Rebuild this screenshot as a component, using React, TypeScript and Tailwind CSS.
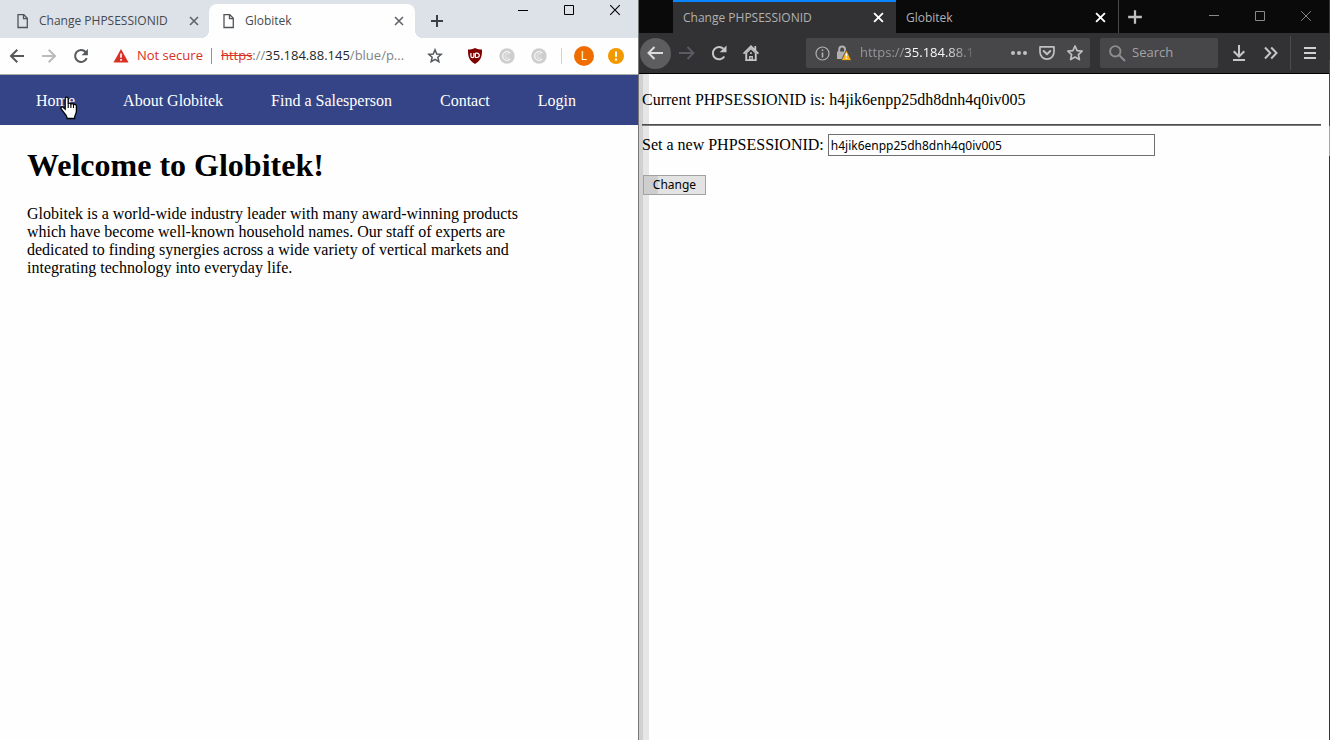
import type { ReactNode } from "react";

type IconProps = { label: string; className?: string; children: ReactNode };

function ToolButton({ label, className = "w-8", children }: IconProps) {
  return (
    <button type="button" aria-label={label} className={`flex h-8 shrink-0 items-center justify-center ${className}`}>
      {children}
    </button>
  );
}

function FileIcon() {
  return (
    <svg width="12" height="16" viewBox="0 0 12 16" fill="none" stroke="#505357" strokeWidth="1.3" className="shrink-0">
      <path d="M1 1.700h5.800l3.500 3.600v9.200H1z" />
      <path d="M6.500 1.700v3.900h3.800" />
    </svg>
  );
}

function Cross({ size = 10, color = "#5f6368", width = 1.6 }: { size?: number; color?: string; width?: number }) {
  return (
    <svg width={size} height={size} viewBox="0 0 10 10" fill="none" stroke={color} strokeWidth={width}>
      <path d="M1 1l8 8M9 1L1 9" />
    </svg>
  );
}

function Plus({ size, color }: { size: number; color: string }) {
  return (
    <svg width={size} height={size} viewBox="0 0 14 14" fill="none" stroke={color} strokeWidth="2">
      <path d="M7 1v12M1 7h12" />
    </svg>
  );
}

function ChromeTabs() {
  return (
    <div className="flex h-[38px] bg-[#dde1e8] font-['Open_Sans',sans-serif] text-xs text-[#45494d]">
      <div className="flex w-[209px] items-center pt-1 pl-[17px]">
        <FileIcon />
        <span className="ml-[10px] flex-1 whitespace-nowrap">Change PHPSESSIONID</span>
        <button type="button" aria-label="Close Change PHPSESSIONID" className="mr-[10px]"><Cross /></button>
      </div>
      <div className="relative mt-1 flex w-[206px] items-center rounded-t-lg bg-[#fefefe] pl-[14px]">
        <span className="absolute bottom-0 -left-2 size-2 bg-[radial-gradient(circle_at_0_0,transparent_8px,#fefefe_8px)]" />
        <span className="absolute -right-2 bottom-0 size-2 bg-[radial-gradient(circle_at_100%_0,transparent_8px,#fefefe_8px)]" />
        <FileIcon />
        <span className="ml-[10px] flex-1">Globitek</span>
        <button type="button" aria-label="Close Globitek" className="mr-[11px]"><Cross /></button>
      </div>
      <button type="button" aria-label="New tab" className="ml-[15px] self-center pt-1"><Plus size={14} color="#3c4043" /></button>
      <div className="ml-auto flex h-5">
        <ToolButton label="Minimize" className="w-[46px] max-h-5">
          <svg width="10" height="10" stroke="#000"><path d="M0 5.5h10" /></svg>
        </ToolButton>
        <ToolButton label="Maximize" className="w-[46px] max-h-5">
          <svg width="10" height="10" stroke="#000" fill="none"><path d="M.5.5h9v9h-9z" /></svg>
        </ToolButton>
        <ToolButton label="Close window" className="w-[46px] max-h-5"><Cross size={12} color="#000" width={0.9} /></ToolButton>
      </div>
    </div>
  );
}

function GreyExtension() {
  return (
    <svg width="16" height="16" viewBox="0 0 16 16" fill="none">
      <circle cx="8" cy="8" r="7.700" fill="#cecece" />
      <path d="M11.300 5.200A4.300 4.300 0 1 0 11.300 10.800" stroke="#f6f6f6" strokeWidth="1.200" />
      <path d="M10 6.500A2.200 2.200 0 1 0 10 9.500" stroke="#f6f6f6" strokeWidth="0.800" />
      <path d="M9 2.600v1.500M9 11.900v1.500" stroke="#e8e8e8" />
    </svg>
  );
}

function ChromeToolbar() {
  return (
    <div className="flex h-9 items-center bg-[#fefefe] pr-[6px] pl-px font-['Open_Sans',sans-serif] text-[13px]">
      <ToolButton label="Back">
        <svg width="16" height="16" viewBox="0 0 16 16" fill="none" stroke="#54575b" strokeWidth="2"><path d="M15 8H2.500M8.300 1.700L2 8l6.300 6.300" /></svg>
      </ToolButton>
      <ToolButton label="Forward">
        <svg width="16" height="16" viewBox="0 0 16 16" fill="none" stroke="#b9babc" strokeWidth="2"><path d="M1 8h12.500M7.700 1.700L14 8l-6.300 6.300" /></svg>
      </ToolButton>
      <ToolButton label="Reload">
        <svg width="16" height="16" viewBox="0 0 16 16"><path d="M13.700 10.200A6 6 0 1 1 12.600 4" fill="none" stroke="#54575b" strokeWidth="2" /><path d="M14.900 1v6.300H8.600z" fill="#54575b" /></svg>
      </ToolButton>
      <button type="button" className="ml-4 flex items-center gap-2 whitespace-nowrap text-[#d93025]">
        <svg width="16" height="14" viewBox="0 0 16 14"><path d="M8 0l7.500 13.500H.5z" fill="#d93025" /><path d="M8 4.500v4.300M8 10v1.800" stroke="#fff" strokeWidth="1.600" /></svg>
        Not secure
      </button>
      <span className="ml-2 h-4 w-px bg-[#8f9296]" />
      <div role="textbox" aria-label="Address" contentEditable suppressContentEditableWarning className="ml-[9px] flex-1 whitespace-nowrap text-[#7f8387]">
        <span className="text-[#d93025] line-through">https</span>://<span className="text-[#26282b]">35.184.88.145</span>/blue/p...
      </div>
      <ToolButton label="Bookmark this page" className="mr-2 w-8">
        <svg width="16" height="16" viewBox="0 0 16 16" fill="none" stroke="#54575b" strokeWidth="1.500"><path d="M8 1.800l1.750 4.150 4.500.400-3.400 2.950 1 4.400L8 11.350 4.150 13.700l1-4.400-3.400-2.950 4.500-.400z" /></svg>
      </ToolButton>
      <ToolButton label="uBlock Origin">
        <svg width="16" height="16" viewBox="0 0 16 16"><path d="M8 0c2.500 1.500 4.500 1.300 7 1.600 0 7-.500 10.500-7 14.400C1.500 12.100 1 8.600 1 1.600 3.500 1.300 5.500 1.500 8 0z" fill="#800000" /><path d="M3.900 5v3c0 2.200 3 2.200 3 0V5M8.400 5.200v4.300h1.500c3.200 0 3.200-4.300 0-4.300H8.400" fill="none" stroke="#fff" strokeWidth="1.200" /></svg>
      </ToolButton>
      <ToolButton label="Cookie extension"><GreyExtension /></ToolButton>
      <ToolButton label="Consent extension"><GreyExtension /></ToolButton>
      <span className="mx-[6px] h-4 w-px bg-[#cfd1d4]" />
      <ToolButton label="Profile">
        <span className="flex size-5 items-center justify-center rounded-full bg-[#ef6c00] text-xs text-white">L</span>
      </ToolButton>
      <ToolButton label="Update available">
        <svg width="16" height="16"><circle cx="8" cy="8" r="8" fill="#f29900" /><path d="M8 3.500v5.300M8 10.500v2" stroke="#fff" strokeWidth="2" /></svg>
      </ToolButton>
    </div>
  );
}

const links = ["Home", "About Globitek", "Find a Salesperson", "Contact", "Login"];

function HandCursor() {
  return (
    <svg width="18" height="24" viewBox="0 0 18 24" className="pointer-events-none absolute top-[7px] left-[24px]">
      <path d="M5.200 13V2.800C5.200.600 8.200.600 8.200 2.800v5c.500-1.100 2.400-1 2.700.400.700-1 2.300-.800 2.600.500.900-.900 2.900-.500 2.900 1.500v5c0 2.500-1.700 4-1.700 6v1.300H7.200c0-2-1.200-3.200-2.300-4.700L1.100 13c-1-1.800 1-2.800 2.200-1.600z" fill="#fff" stroke="#000" strokeWidth="1.300" />
      <path d="M8.200 7.500V12M10.900 8.200V12M13.500 8.800V12" stroke="#000" strokeWidth="1.100" />
    </svg>
  );
}

function ChromeWindow() {
  return (
    <section aria-label="Globitek" className="flex min-w-0 flex-col border-r border-[#777] bg-[#fefefe]">
      <ChromeTabs />
      <ChromeToolbar />
      <nav className="flex h-[51px] items-center gap-12 border-t border-[#aaa] bg-[#344486] pt-[2px] pl-9 font-['Liberation_Serif',serif] text-base whitespace-nowrap text-white">
        {links.map((name) => (
          <a key={name} href="#" className="relative">
            {name}
            {name === "Home" && <HandCursor />}
          </a>
        ))}
      </nav>
      <main className="px-[27px] pt-[22px] font-['Liberation_Serif',serif] text-black">
        <h1 className="text-[32px] leading-9 font-bold">Welcome to Globitek!</h1>
        <p className="mt-[22px] max-w-[500px] text-base leading-[18px]">
          Globitek is a world-wide industry leader with many award-winning products which have become well-known household names. Our staff of experts are dedicated to finding synergies across a wide variety of vertical markets and integrating technology into everyday life.
        </p>
      </main>
    </section>
  );
}

function FirefoxTabs() {
  return (
    <div className="flex h-[33px] bg-[#0a0a0a] pl-[34px] font-['Open_Sans',sans-serif] text-xs text-[#b1b1b3]">
      <div className="flex w-[223px] items-center border-t-2 border-[#0a84ff] bg-[#323234] pl-[10px]">
        <span className="flex-1 whitespace-nowrap">Change PHPSESSIONID</span>
        <button type="button" aria-label="Close Change PHPSESSIONID" className="mr-3"><Cross size={11} color="#fff" width={1.7} /></button>
      </div>
      <div className="flex w-[223px] items-center border-r border-[#4a4a4c] pt-[2px] pl-[10px]">
        <span className="flex-1">Globitek</span>
        <button type="button" aria-label="Close Globitek" className="mr-3"><Cross size={11} color="#fff" width={1.7} /></button>
      </div>
      <button type="button" aria-label="New tab" className="ml-2"><Plus size={16} color="#c0c0c2" /></button>
      <div className="ml-auto flex">
        <ToolButton label="Minimize" className="w-[46px]">
          <svg width="10" height="10" stroke="#8a8a8c"><path d="M0 4.500h10" /></svg>
        </ToolButton>
        <ToolButton label="Maximize" className="w-[46px]">
          <svg width="10" height="10" stroke="#8a8a8c" fill="none"><path d="M.5.5h9v9h-9z" /></svg>
        </ToolButton>
        <ToolButton label="Close window" className="w-[46px]"><Cross size={12} color="#8a8a8c" width={0.8} /></ToolButton>
      </div>
    </div>
  );
}

function FirefoxToolbar() {
  return (
    <div className="flex h-[41px] items-center border-b border-black bg-[#323234] pr-[3px] font-['Open_Sans',sans-serif] text-[13px]">
      <ToolButton label="Back">
        <span className="flex size-[31px] items-center justify-center rounded-full bg-[#5d5d5f]">
          <svg width="18" height="16" viewBox="0 0 18 16" fill="none" stroke="#dcdcde" strokeWidth="2"><path d="M17 8H2.500M8.500 2L2.500 8l6 6" /></svg>
        </span>
      </ToolButton>
      <ToolButton label="Forward">
        <svg width="16" height="14" viewBox="0 0 16 14" fill="none" stroke="#5b5b64" strokeWidth="1.800"><path d="M0 7h14M8.500 1L14.500 7l-6 6" /></svg>
      </ToolButton>
      <ToolButton label="Reload">
        <svg width="16" height="16" viewBox="0 0 16 16"><path d="M13.300 11.500A6.200 6.200 0 1 1 12.500 3.800" fill="none" stroke="#c6c6c8" strokeWidth="2" /><path d="M15.500.500v6.800H8.700z" fill="#c6c6c8" /></svg>
      </ToolButton>
      <ToolButton label="Home">
        <svg width="16" height="16" viewBox="0 0 16 16">
          <path d="M.5 8.700L8 1.300l7.500 7.400M12.300 1v4.500" fill="none" stroke="#c6c6c8" strokeWidth="1.800" />
          <path d="M2.300 8.200L8 2.600l5.700 5.600V16H2.300z" fill="#c6c6c8" />
          <path d="M4.200 14.200V8.100L8 4.400l3.800 3.700v6.100z" fill="#323234" />
          <path d="M6.100 16v-5h3.800v5zM7.200 7.300h1.600v1.700H7.200z" fill="#c6c6c8" />
          <path d="M7.500 12.200h1V14h-1z" fill="#323234" />
        </svg>
      </ToolButton>
      <div className="ml-[39px] flex h-[30px] min-w-0 flex-1 items-center rounded-xs bg-[#474749] px-[1px]">
        <button type="button" aria-label="Site information" className="ml-2 shrink-0">
          <svg width="15" height="15" viewBox="0 0 15 15" fill="none" stroke="#b1b1b3"><circle cx="7.500" cy="7.500" r="6.500" strokeWidth="1.200" /><path d="M7.500 6.500v5M7.500 3.500v1.600" strokeWidth="1.600" /></svg>
        </button>
        <button type="button" aria-label="Connection warning" className="ml-[6px] shrink-0">
          <svg width="16" height="16" viewBox="0 0 16 16"><path d="M3.200 7V4.500a2.900 2.900 0 0 1 5.800 0V7" fill="none" stroke="#b1b1b3" strokeWidth="2" /><path d="M1 6.500h10V14H1z" fill="#b1b1b3" /><path d="M10.500 5l5 10.500H5.200z" fill="#ffaf0f" stroke="#474749" strokeWidth="0.800" strokeLinejoin="round" /><path d="M10.400 8.300v3.200M10.400 12.500v1.400" stroke="#fff" strokeWidth="1.400" /></svg>
        </button>
        <div role="textbox" aria-label="Address" contentEditable suppressContentEditableWarning className="ml-2 whitespace-nowrap text-[#97979b] [mask-image:linear-gradient(to_right,#000_84px,transparent_118px)]">
          https://<span className="text-[#f9f9fa]">35.184.88.1</span>
        </div>
        <div className="ml-auto flex">
          <ToolButton label="Page actions" className="w-7">
            <svg width="16" height="4" fill="#c0c0c2"><circle cx="2" cy="2" r="2" /><circle cx="8" cy="2" r="2" /><circle cx="14" cy="2" r="2" /></svg>
          </ToolButton>
          <ToolButton label="Save to Pocket" className="w-7">
            <svg width="16" height="16" viewBox="0 0 16 16" fill="none" stroke="#c0c0c2" strokeWidth="1.700" strokeLinejoin="round"><path d="M1 1.800h14v5.300a7 7 0 0 1-14 0z" /><path d="M4.700 6L8 9.200 11.300 6" strokeWidth="2" strokeLinecap="round" /></svg>
          </ToolButton>
          <ToolButton label="Bookmark this page" className="w-7">
            <svg width="16" height="16" viewBox="0 0 16 16" fill="none" stroke="#c0c0c2" strokeWidth="1.700" strokeLinejoin="round"><path d="M8 1l2.100 4.600 5 .600-3.700 3.400 1 5L8 12.100l-4.400 2.500 1-5L.900 6.200l5-.600z" /></svg>
          </ToolButton>
        </div>
      </div>
      <label className="ml-[10px] flex h-[30px] w-[118px] shrink-0 items-center gap-[6px] rounded-xs bg-[#474749] pl-[9px]">
        <svg width="17" height="17" viewBox="0 0 17 17" fill="none" stroke="#8d8d90" strokeWidth="1.900" className="shrink-0"><circle cx="6.300" cy="6.300" r="5.200" /><path d="M10 10l6 6" /></svg>
        <input type="search" aria-label="Search" placeholder="Search" className="w-full min-w-0 bg-transparent text-[13px] outline-none placeholder:text-[#a4a4a6]" />
      </label>
      <ToolButton label="Downloads" className="ml-[5px] w-8">
        <svg width="14" height="16" viewBox="0 0 14 16" fill="none" stroke="#c6c6c8" strokeWidth="2"><path d="M7 0v11M1.700 6.200L7 11.500l5.300-5.300M1 15h12" /></svg>
      </ToolButton>
      <ToolButton label="More tools">
        <svg width="14" height="14" viewBox="0 0 14 14" fill="none" stroke="#c6c6c8" strokeWidth="2"><path d="M1 1.500L6.300 7 1 12.500M7.200 1.500L12.500 7l-5.300 5.500" /></svg>
      </ToolButton>
      <span className="mx-[3px] h-[34px] w-px bg-[#4c4c4e]" />
      <ToolButton label="Menu">
        <svg width="12" height="14" viewBox="0 0 12 14" stroke="#d0d0d2" strokeWidth="2"><path d="M0 2h12M0 7h12M0 12h12" /></svg>
      </ToolButton>
    </div>
  );
}

function FirefoxWindow() {
  return (
    <section aria-label="Change PHPSESSIONID" className="flex min-w-0">
      <div className="flex min-w-0 flex-1 flex-col">
        <FirefoxTabs />
        <FirefoxToolbar />
        <main className="flex-1 bg-[linear-gradient(to_right,#d0d0d0_4px,#e6e6e6_4px,#e6e6e6_10px,#fefefe_10px)] pt-[17px] pr-2 pl-[3px] font-['Liberation_Serif',serif] text-base leading-[18px] text-black">
          <p>Current PHPSESSIONID is: h4jik6enpp25dh8dnh4q0iv005</p>
          <hr className="mt-[15px] h-[2px] border-t border-b border-t-[#4c4c4c] border-b-[#7c7c7c]" />
          <form className="mt-2" onSubmit={(event) => event.preventDefault()}>
            <div className="flex items-center gap-1">
              <label htmlFor="session">Set a new PHPSESSIONID:</label>
              <input id="session" defaultValue="h4jik6enpp25dh8dnh4q0iv005" className="h-[22px] w-[327px] border border-[#6f6f6f] bg-[#fefefe] px-[2px] font-['Noto_Sans',sans-serif] text-xs outline-none" />
            </div>
            <button type="submit" className="mt-[19px] ml-px h-5 w-[63px] border border-[#a2a2a2] bg-[linear-gradient(to_right,#cecece_14px,#e3e3e3_14px)] font-['Noto_Sans',sans-serif] text-xs leading-4">Change</button>
          </form>
        </main>
      </div>
      <div className="flex w-px flex-col bg-[#333338]">
        <span className="h-[60px] bg-[#4a2c42]" />
        <span className="h-[66px] bg-[#3d4568]" />
        <span className="h-[30px] bg-[#9eaaa8]" />
      </div>
    </section>
  );
}

export default function App() {
  return (
    <div className="grid min-h-screen grid-cols-[639fr_691fr] overflow-hidden">
      <ChromeWindow />
      <FirefoxWindow />
    </div>
  );
}
